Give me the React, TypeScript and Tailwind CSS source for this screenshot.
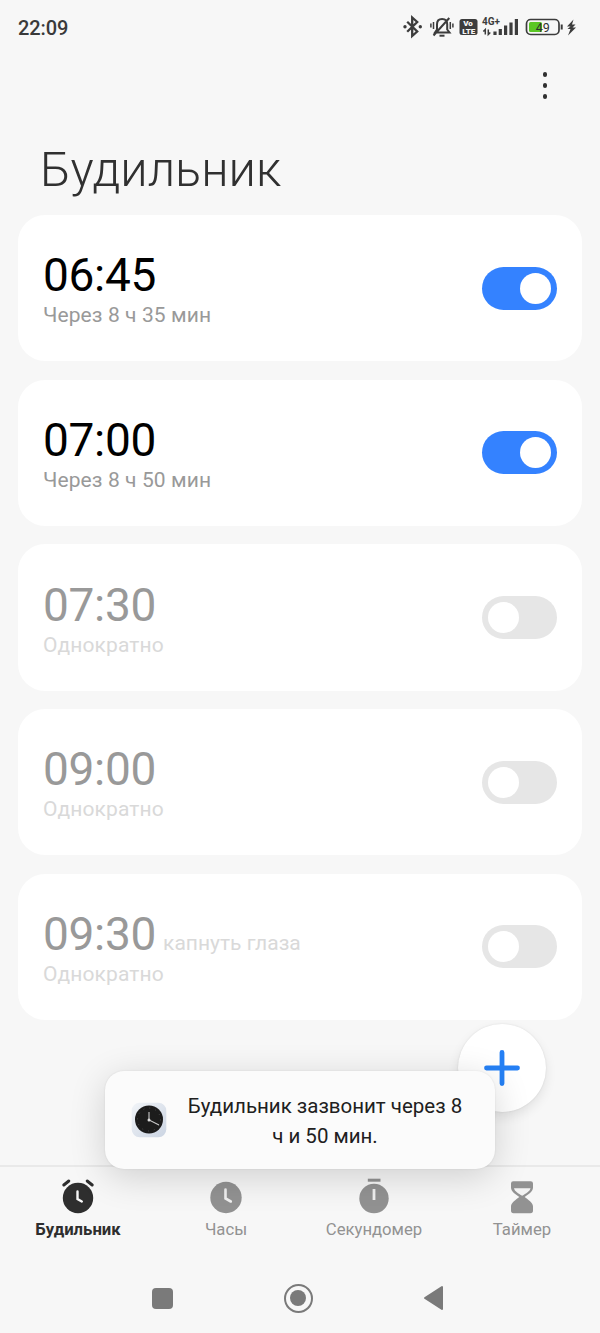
import { useState } from "react";
import type { ReactNode } from "react";

type Alarm = {
  time: string;
  note?: string;
  label: string;
  enabled: boolean;
};

const initialAlarms: Alarm[] = [
  { time: "06:45", label: "Через 8 ч 35 мин", enabled: true },
  { time: "07:00", label: "Через 8 ч 50 мин", enabled: true },
  { time: "07:30", label: "Однократно", enabled: false },
  { time: "09:00", label: "Однократно", enabled: false },
  { time: "09:30", note: "капнуть глаза", label: "Однократно", enabled: false },
];

function StatusBar() {
  return (
    <header className="flex h-[54px] items-center justify-between pl-[18px] pr-[22px]">
      <span className="pt-[2px] text-[20px] leading-none font-medium tracking-[-0.1px] text-[#3a3a3a]">22:09</span>
      <svg width="176" height="26" viewBox="402 14 176 26" fill="none" stroke="#3c3c3c">
        {/* Bluetooth */}
        <path d="M407.2 21.7l10 9.8-5 4.500V17.500l5 4.500-10 9.800" strokeWidth="2.3" />
        <g fill="#3c3c3c" stroke="none">
          <circle cx="405" cy="26.800" r="1.700" />
          <circle cx="420.300" cy="26.800" r="1.700" />
        </g>
        {/* Muted bell */}
        <path
          d="M435 32.500h14.500l-2.300-3v-5.200c0-3.200-2-5.400-5.100-5.400s-5.100 2.200-5.100 5.400v5.200zM433.500 35.500l15.800-17.500"
          strokeWidth="2"
        />
        <path d="M439.500 35.700h5" strokeWidth="2" />
        <path d="M430.900 23.500v4M433.500 22v7M450.300 22v7M452.900 23.500v4" strokeWidth="1.500" />
        {/* VoLTE */}
        <rect x="459.500" y="19" width="18" height="16" rx="2.500" fill="#3c3c3c" stroke="none" />
        <g fill="#f7f7f7" stroke="none" fontFamily="Roboto" fontWeight="900">
          <text x="468" y="26.400" fontSize="8" textAnchor="middle">Vo</text>
          <text x="468.800" y="33.700" fontSize="8" textAnchor="middle">LTE</text>
        </g>
        {/* Signal */}
        <text x="482" y="25.400" fontSize="10" fontWeight="700" fontFamily="Roboto" fill="#3c3c3c" stroke="none" textLength="18">4G+</text>
        <path d="M485.300 34.500v-5l-2 2M488.300 29.500v5l2-2" strokeWidth="1.500" />
        <path d="M495 35v-3.500M500.300 35v-6M505.600 35v-9.500M511 35V22.500M516.400 35V19" strokeWidth="3.200" />
        {/* Battery */}
        <rect x="526.500" y="19.500" width="32.500" height="15" rx="4.200" strokeWidth="1.700" />
        <rect x="529" y="22" width="13" height="10" rx="1.500" fill="#5ac725" stroke="none" />
        <path d="M561.700 24.500v5" strokeWidth="2" />
        <text x="542.800" y="31.600" fontSize="12.500" textAnchor="middle" fontFamily="Roboto" fill="#303030" stroke="none">49</text>
        <path d="M573.500 19.500l-6.500 7h3.500l-3 2.500h3l-2.500 6.500 8-8h-3.500l3-3h-3.500z" fill="#3c3c3c" stroke="none" />
      </svg>
    </header>
  );
}

function Toggle({ on, onClick }: { on: boolean; onClick: () => void }) {
  return (
    <button
      role="switch"
      aria-checked={on}
      onClick={onClick}
      className={`flex h-[43px] w-[75px] items-center rounded-full px-[6px] ${
        on ? "justify-end bg-[#3482ff]" : "justify-start bg-[#e6e6e6]"
      }`}
    >
      <span className="size-[31px] rounded-full bg-white" />
    </button>
  );
}

function AlarmCard({ alarm, onToggle }: { alarm: Alarm; onToggle: () => void }) {
  return (
    <li className="flex h-[146.4px] items-center justify-between rounded-[27px] bg-white pl-[25px] pr-[24.6px]">
      <div className="flex flex-col pt-[5px]">
        <div className="flex items-baseline gap-[7px]">
          <span
            className={`text-[46px] leading-[50px] tracking-[-0.3px] ${
              alarm.enabled ? "text-black" : "text-[#999999]"
            }`}
          >
            {alarm.time}
          </span>
          {alarm.note && <span className="text-[21px] leading-[24px] text-[#d9d9d9]">{alarm.note}</span>}
        </div>
        <span
          className={`text-[21px] leading-[31px] tracking-[0.1px] ${
            alarm.enabled ? "text-[#999999]" : "text-[#d9d9d9]"
          }`}
        >
          {alarm.label}
        </span>
      </div>
      <Toggle on={alarm.enabled} onClick={onToggle} />
    </li>
  );
}

function Toast() {
  return (
    <div className="absolute left-[105px] top-[1071px] flex h-[97.5px] w-[390px] items-center rounded-[19px] bg-[#fbfbfb] pl-[26px] pr-[20px] shadow-[0_8px_36px_rgba(0,0,0,0.16),0_0_2px_rgba(0,0,0,0.1)]">
      <svg width="36" height="36" viewBox="0 0 36 36" className="shrink-0">
        <defs>
          <linearGradient id="case" x1="0" y1="0" x2="1" y2="1">
            <stop offset="0" stopColor="#f1f4f8" />
            <stop offset="1" stopColor="#cbd4e2" />
          </linearGradient>
        </defs>
        <rect x="0.7" y="0.7" width="34.6" height="34.6" rx="8" fill="url(#case)" />
        <circle cx="18" cy="17.5" r="14" fill="#1c1c1c" />
        <circle cx="18" cy="17.5" r="11.5" fill="none" stroke="#555" strokeWidth="0.9" strokeDasharray="0.9 5.12" />
        <path d="M18 10v8l10 5" fill="none" stroke="#c9c9c9" strokeWidth="1.1" />
        <circle cx="18" cy="18" r="1.5" fill="#ddd" />
      </svg>
      <p className="flex-1 pl-[8px] pt-[2px] text-center text-[20.5px] leading-[30px] text-[#202020]">
        Будильник зазвонит через 8
        <br />ч и 50 мин.
      </p>
    </div>
  );
}

const tabs: { name: string; icon: ReactNode }[] = [
  {
    name: "Будильник",
    icon: (
      <>
        <circle cx="20" cy="22" r="15.2" fill="currentColor" />
        <path d="M19.500 15.500v7.500l4.300 2.500" stroke="#f7f7f7" strokeWidth="2.4" fill="none" strokeLinecap="round" />
        <path d="M5.800 9l5-4M34.200 9l-5-4" stroke="currentColor" strokeWidth="3" strokeLinecap="round" />
      </>
    ),
  },
  {
    name: "Часы",
    icon: (
      <>
        <circle cx="20" cy="21.5" r="15.7" fill="currentColor" />
        <path d="M19.500 13.500v9l5.300 3" stroke="#f0f0f0" strokeWidth="2.6" fill="none" strokeLinecap="round" />
      </>
    ),
  },
  {
    name: "Секундомер",
    icon: (
      <>
        <path d="M13.800 4.200h12.700" stroke="currentColor" strokeWidth="3" />
        <circle cx="20" cy="22.5" r="14.7" fill="currentColor" />
        <path d="M20 13v11" stroke="#f0f0f0" strokeWidth="2.8" />
      </>
    ),
  },
  {
    name: "Таймер",
    icon: (
      <>
        <path
          d="M11.300 5.300h17.400q2.300 0 2.300 2.300v4c0 4.500-5 6.700-8.300 9.400 3.300 2.700 8.300 5.500 8.300 9.500v4q0 2.800-2.500 2.800h-17q-2.500 0-2.500-2.800v-4c0-4 5-6.800 8.300-9.500C14 18.300 9 16.100 9 11.600v-4q0-2.300 2.300-2.300z"
          fill="currentColor"
        />
        <path d="M12 12.200h16.500c-.5 3-4.500 5.300-8.300 7.600-3.800-2.300-7.700-4.600-8.200-7.600z" fill="#f3f3f3" />
      </>
    ),
  },
];

function TabBar() {
  return (
    <nav className="flex h-[98px] border-t-2 border-[#e9e9e9] px-[4px] pt-[9px]">
      {tabs.map((tab, i) => (
        <a
          key={tab.name}
          className={`flex flex-1 flex-col items-center ${i === 0 ? "font-bold text-[#2e2e2e]" : "text-[#929292]"}`}
        >
          <svg width="40" height="40" viewBox="0 0 40 40" fill="none">
            {tab.icon}
          </svg>
          <span className="mt-[2px] text-[16.7px] leading-[24px]">{tab.name}</span>
        </a>
      ))}
    </nav>
  );
}

function SystemNav() {
  return (
    <footer className="flex h-[70px] items-center justify-between pl-[152px] pr-[156px] text-[#7a7a7a]">
      <span className="size-[21px] rounded-[4px] bg-current" />
      <span className="flex size-[29px] items-center justify-center rounded-full border-2 border-current">
        <span className="size-[16px] rounded-full bg-current" />
      </span>
      <svg width="21" height="26" viewBox="0 0 21 26" fill="currentColor" stroke="currentColor" strokeWidth="2" strokeLinejoin="round">
        <path d="M2 13L19 2v22z" />
      </svg>
    </footer>
  );
}

export default function App() {
  const [alarms, setAlarms] = useState(initialAlarms);

  const toggleAlarm = (index: number) => {
    setAlarms(alarms.map((a, i) => (i === index ? { ...a, enabled: !a.enabled } : a)));
  };

  return (
    <div className="relative flex h-[1333px] w-[600px] flex-col overflow-hidden bg-[#f7f7f7] font-[Roboto,sans-serif]">
      <StatusBar />
      <div className="flex h-[64px] items-center justify-end pr-[53px]">
        <button className="flex flex-col gap-[6.3px] pb-px">
          <span className="size-[4.5px] rounded-full bg-[#303030]" />
          <span className="size-[4.5px] rounded-full bg-[#303030]" />
          <span className="size-[4.5px] rounded-full bg-[#303030]" />
        </button>
      </div>
      <h1 className="h-[97px] pl-[40px] pt-[22px] text-[48.7px] leading-[60px] font-light text-[#303030]">Будильник</h1>

      <ul className="flex flex-1 flex-col gap-[18.3px] px-[18px]">
        {alarms.map((alarm, i) => (
          <AlarmCard key={alarm.time} alarm={alarm} onToggle={() => toggleAlarm(i)} />
        ))}
      </ul>

      <TabBar />
      <SystemNav />

      {/* Floating add button */}
      <button className="absolute left-[458px] top-[1024px] flex size-[88px] items-center justify-center rounded-full bg-white shadow-[0_5px_12px_rgba(0,0,0,0.09),0_0_2px_rgba(0,0,0,0.1)]">
        <svg width="36" height="36" viewBox="0 0 36 36" stroke="#2580f5" strokeWidth="4.8" strokeLinecap="round">
          <path d="M18 2.500v31M2.500 18h31" />
        </svg>
      </button>
      <Toast />
    </div>
  );
}
